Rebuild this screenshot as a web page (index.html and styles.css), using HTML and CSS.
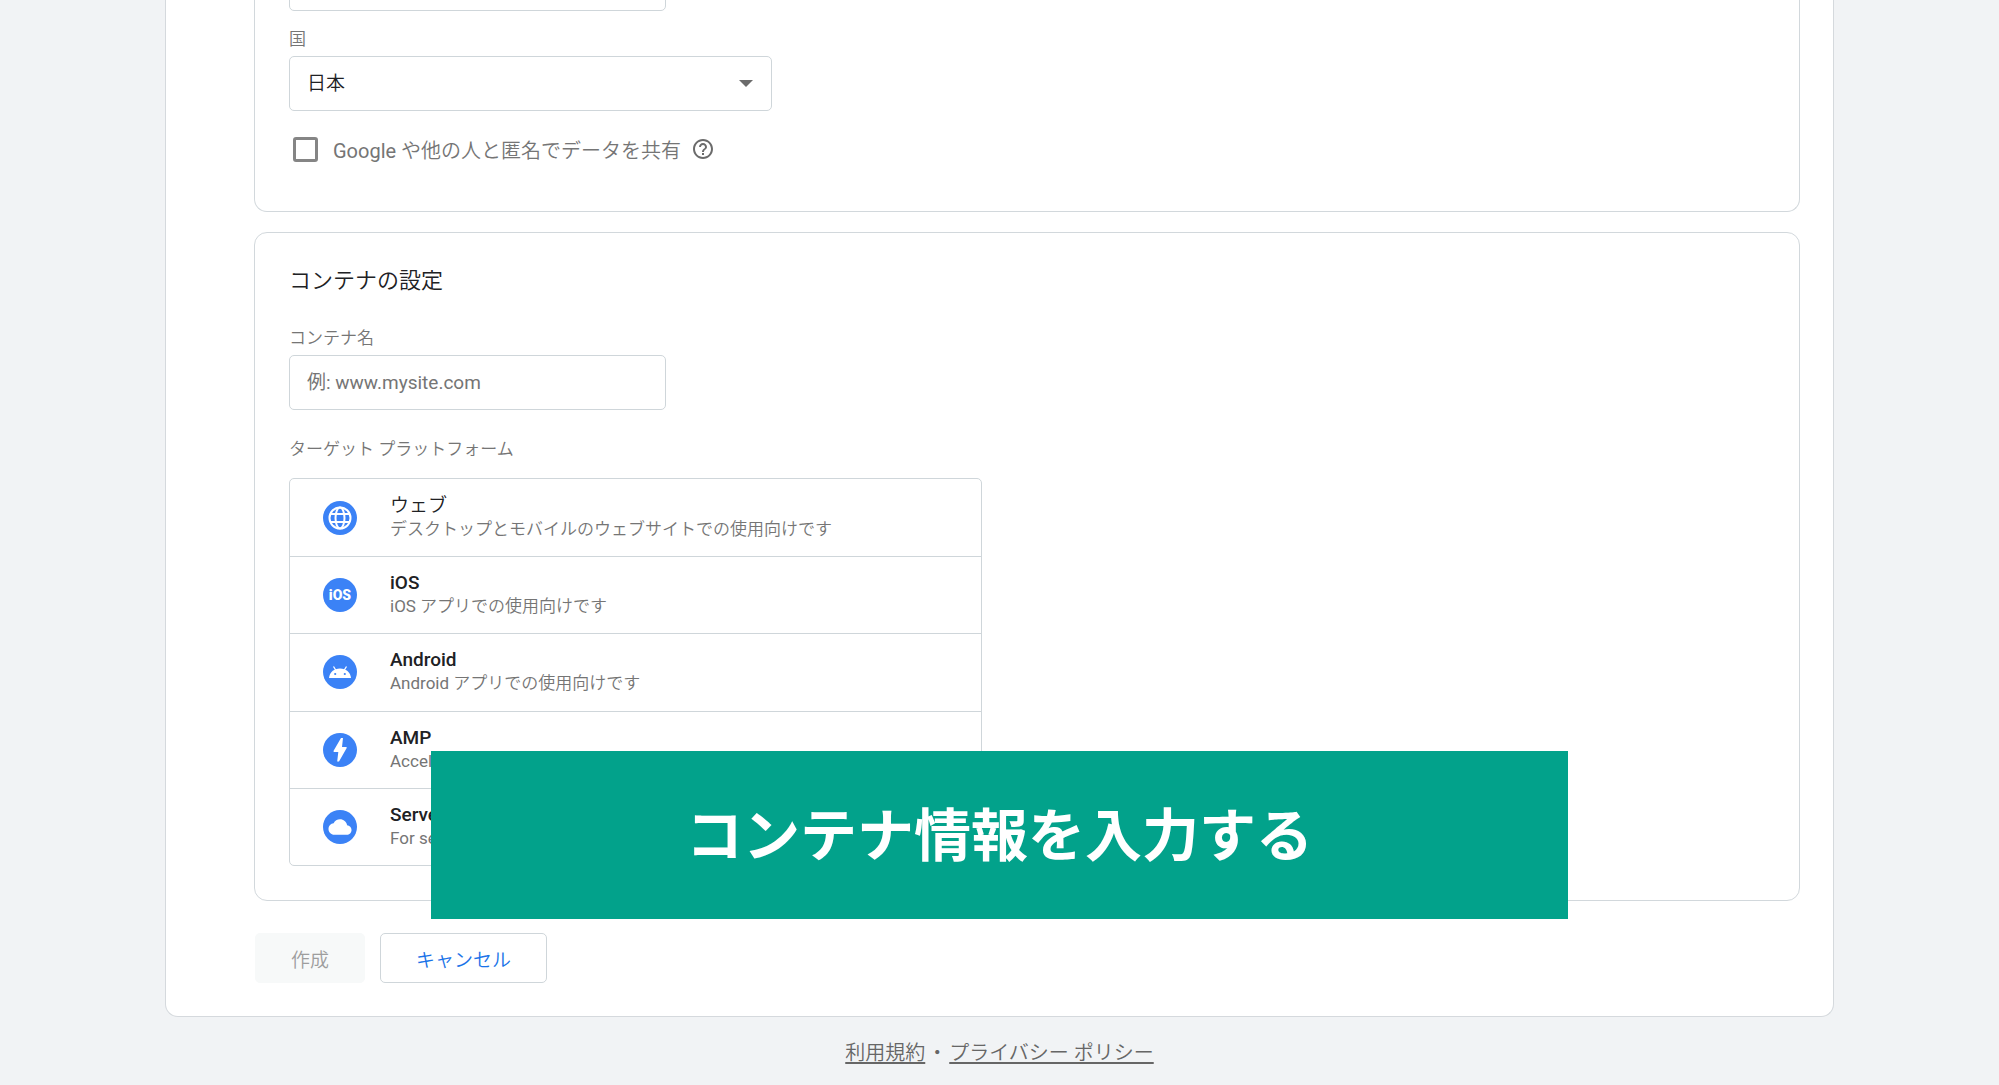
FILE: index.html
```html
<!DOCTYPE html>
<html lang="ja">
<head>
<meta charset="utf-8">
<meta name="viewport" content="width=device-width, initial-scale=1">
<title>コンテナの設定</title>
<link rel="stylesheet" href="styles.css">
</head>
<body>
<main class="sheet">
  <form class="form">
    <section class="panel account">
      <input class="field" type="text" aria-label="アカウント名">
      <label class="label country-label" for="country">国</label>
      <div class="select">
        <select id="country" class="select-control"><option>日本</option></select>
        <svg class="select-arrow" width="14" height="7" viewBox="0 0 14 7" aria-hidden="true"><path d="M0 0h14L7 7z"/></svg>
      </div>
      <div class="share">
        <input class="share-box" type="checkbox" id="share">
        <label for="share"><span class="latin">Google</span> や他の人と匿名でデータを共有</label>
        <svg class="help" width="20" height="20" viewBox="2 2 20 20" aria-hidden="true"><path d="M11 18h2v-2h-2v2zm1-16C6.480 2 2 6.480 2 12s4.480 10 10 10 10-4.480 10-10S17.520 2 12 2zm0 18c-4.410 0-8-3.590-8-8s3.590-8 8-8 8 3.590 8 8-3.590 8-8 8zm0-14c-2.210 0-4 1.790-4 4h2c0-1.100.9-2 2-2s2 .9 2 2c0 2-3 1.750-3 5h2c0-2.250 3-2.500 3-5 0-2.210-1.790-4-4-4z"/></svg>
      </div>
    </section>

    <section class="panel container">
      <h2 class="title">コンテナの設定</h2>
      <label class="label" for="name">コンテナ名</label>
      <input class="field" id="name" type="text" placeholder="例: www.mysite.com">
      <p class="label platform-label" id="platform">ターゲット プラットフォーム</p>
      <ul class="platforms" aria-labelledby="platform">
        <li class="platform"><button class="platform-button" type="button">
          <svg class="icon" viewBox="0 0 34 34" aria-hidden="true"><circle cx="17" cy="17" r="17"/><g fill="none" stroke="#fff" stroke-width="2"><circle cx="17" cy="17" r="10.500"/><ellipse cx="17" cy="17" rx="4.500" ry="10.500"/><path d="M7.500 13h19M7.500 21h19"/></g></svg>
          <span class="platform-text"><span class="platform-name">ウェブ</span><span class="platform-note">デスクトップとモバイルのウェブサイトでの使用向けです</span></span>
        </button></li>
        <li class="platform"><button class="platform-button" type="button">
          <svg class="icon" viewBox="0 0 34 34" aria-hidden="true"><circle cx="17" cy="17" r="17"/><text class="icon-text" x="17" y="22" text-anchor="middle">iOS</text></svg>
          <span class="platform-text"><span class="platform-name latin-name">iOS</span><span class="platform-note"><span class="latin">iOS</span> アプリでの使用向けです</span></span>
        </button></li>
        <li class="platform"><button class="platform-button" type="button">
          <svg class="icon" viewBox="0 0 34 34" aria-hidden="true"><circle cx="17" cy="17" r="17"/><path d="M10.500 11.500l2.500 4M23.500 11.500l-2.500 4" stroke="#fff" stroke-width="1.300"/><path fill="#fff" d="M6 23c.6-5.700 5-9.500 11-9.500S27.400 17.300 28 23z"/><circle cx="12.200" cy="19" r="1.100"/><circle cx="21.800" cy="19" r="1.100"/></svg>
          <span class="platform-text"><span class="platform-name latin-name">Android</span><span class="platform-note"><span class="latin">Android</span> アプリでの使用向けです</span></span>
        </button></li>
        <li class="platform"><button class="platform-button" type="button">
          <svg class="icon" viewBox="0 0 34 34" aria-hidden="true"><circle cx="17" cy="17" r="17"/><path fill="#fff" d="M18 5h2l-1 9h4.200q.7.200.5 1L16 28.500h-1.800L15.300 19H11q-.8-.3-.4-1.200z"/></svg>
          <span class="platform-text"><span class="platform-name latin-name">AMP</span><span class="platform-note latin">Accelerated Mobile Pages</span></span>
        </button></li>
        <li class="platform"><button class="platform-button" type="button">
          <svg class="icon" viewBox="0 0 34 34" aria-hidden="true"><circle cx="17" cy="17" r="17"/><path fill="#fff" transform="translate(5.500 5.500) scale(.96)" d="M19.350 10.040C18.670 6.590 15.640 4 12 4 9.110 4 6.600 5.640 5.350 8.040 2.340 8.360 0 10.910 0 14c0 3.310 2.690 6 6 6h13c2.760 0 5-2.240 5-5 0-2.640-2.050-4.780-4.650-4.960z"/></svg>
          <span class="platform-text"><span class="platform-name latin-name">Server</span><span class="platform-note latin">For server-side tagging</span></span>
        </button></li>
      </ul>
    </section>

    <div class="actions">
      <button class="button create" type="submit" disabled>作成</button>
      <button class="button cancel" type="button">キャンセル</button>
    </div>
  </form>
</main>
<footer class="footer">
  <a href="#terms">利用規約</a><span>・</span><a href="#privacy">プライバシー ポリシー</a>
</footer>
<div class="caption">コンテナ情報を入力する</div>
</body>
</html>
```
FILE: styles.css
```css
* { box-sizing: border-box; }

body {
  margin: 0;
  overflow: hidden;
  background: #f1f3f5;
  color: #202124;
  font-family: Roboto, "Noto Sans CJK JP", sans-serif;
  font-size: 19px;
  font-weight: 350;
}

button, input, select { font: inherit; color: inherit; }

.latin { font-weight: 400; }

/* The sheet is scrolled: its top edge is above the window. */
.sheet {
  margin: -44px 165px 0;
  padding: 0 33px 33px 88px;
  background: #fff;
  border: 1px solid #d5d9dd;
  border-top: 0;
  border-radius: 0 0 13px 13px;
}

.panel {
  padding: 32px 34px 34px;
  border: 1px solid #d2d8dc;
  border-radius: 13px;
}

.account {
  padding-top: 0;
  padding-bottom: 48px;
  border-top: 0;
  border-radius: 0 0 13px 13px;
}

.container { margin-top: 20px; }

.field {
  display: block;
  width: 377px;
  height: 55px;
  padding: 0 17px;
  background: #fff;
  border: 1px solid #cfd6da;
  border-radius: 5px;
}

.field::placeholder { color: #757575; opacity: 1; font-weight: 400; }

.label {
  display: block;
  margin: 0;
  color: #757575;
  font-size: 17px;
  line-height: 24px;
}

.country-label { margin: 16px 0 5px; }

.select {
  display: grid;
  align-items: center;
  width: 483px;
}

.select-control {
  grid-area: 1 / 1;
  width: 100%;
  height: 55px;
  padding: 0 17px;
  appearance: none;
  background: #fff;
  border: 1px solid #cfd6da;
  border-radius: 5px;
}

.select-arrow {
  grid-area: 1 / 1;
  justify-self: end;
  margin-right: 19px;
  fill: #6b6b6b;
  pointer-events: none;
}

.share {
  display: flex;
  align-items: center;
  height: 28px;
  margin-top: 24px;
  padding-left: 4px;
  color: #757575;
  font-size: 20px;
}

.share-box {
  appearance: none;
  width: 25px;
  height: 25px;
  margin: 0 15px 0 0;
  border: 3px solid #858585;
  border-radius: 3px;
}

.help { margin-left: 12px; fill: #6b6b6b; }

.title {
  margin: 0 0 29px;
  font-size: 22px;
  font-weight: 350;
  line-height: 32px;
}

.container .field { margin-top: 5px; }

.platform-label { margin: 27px 0 17px; }

.platforms {
  display: grid;
  grid-auto-rows: 1fr;
  width: 693px;
  min-height: 388px;
  margin: 0;
  padding: 0;
  list-style: none;
  border: 1px solid #cfd6da;
  border-radius: 5px;
}

.platform + .platform { border-top: 1px solid #cfd6da; }

.platform-button {
  display: flex;
  align-items: center;
  gap: 33px;
  width: 100%;
  height: 100%;
  padding: 0 33px;
  text-align: left;
  background: none;
  border: 0;
}

.icon { width: 34px; height: 34px; fill: #3b82f6; }

.icon-text { fill: #fff; font-size: 14px; font-weight: 900; }

.platform-text { display: grid; padding-bottom: 2px; }

.platform-name { line-height: 24px; }

.latin-name { font-weight: 500; }

.platform-note { color: #757575; font-size: 17px; line-height: 22px; }

.actions { display: flex; gap: 15px; margin-top: 32px; padding-left: 1px; }

.button {
  height: 50px;
  padding: 0 35px;
  font-size: 19px;
  border: 1px solid #cfd6da;
  border-radius: 5px;
}

.create { color: #9e9e9e; background: #f7f9f9; border-color: #f7f9f9; }

.cancel { color: #1a73e8; background: #fff; }

.footer {
  display: flex;
  justify-content: center;
  align-items: center;
  gap: 2px;
  padding: 22px 0 18px;
  color: #666;
  font-size: 20px;
  line-height: 28px;
}

.footer a { color: inherit; text-underline-offset: 2px; }

/* Caption laid over the page */
.caption {
  position: fixed;
  right: 431px;
  bottom: 166px;
  left: 431px;
  padding: 44px 0 40px;
  color: #fff;
  background: #02a28b;
  font-size: 57px;
  font-weight: 700;
  line-height: 84px;
  text-align: center;
}
```
